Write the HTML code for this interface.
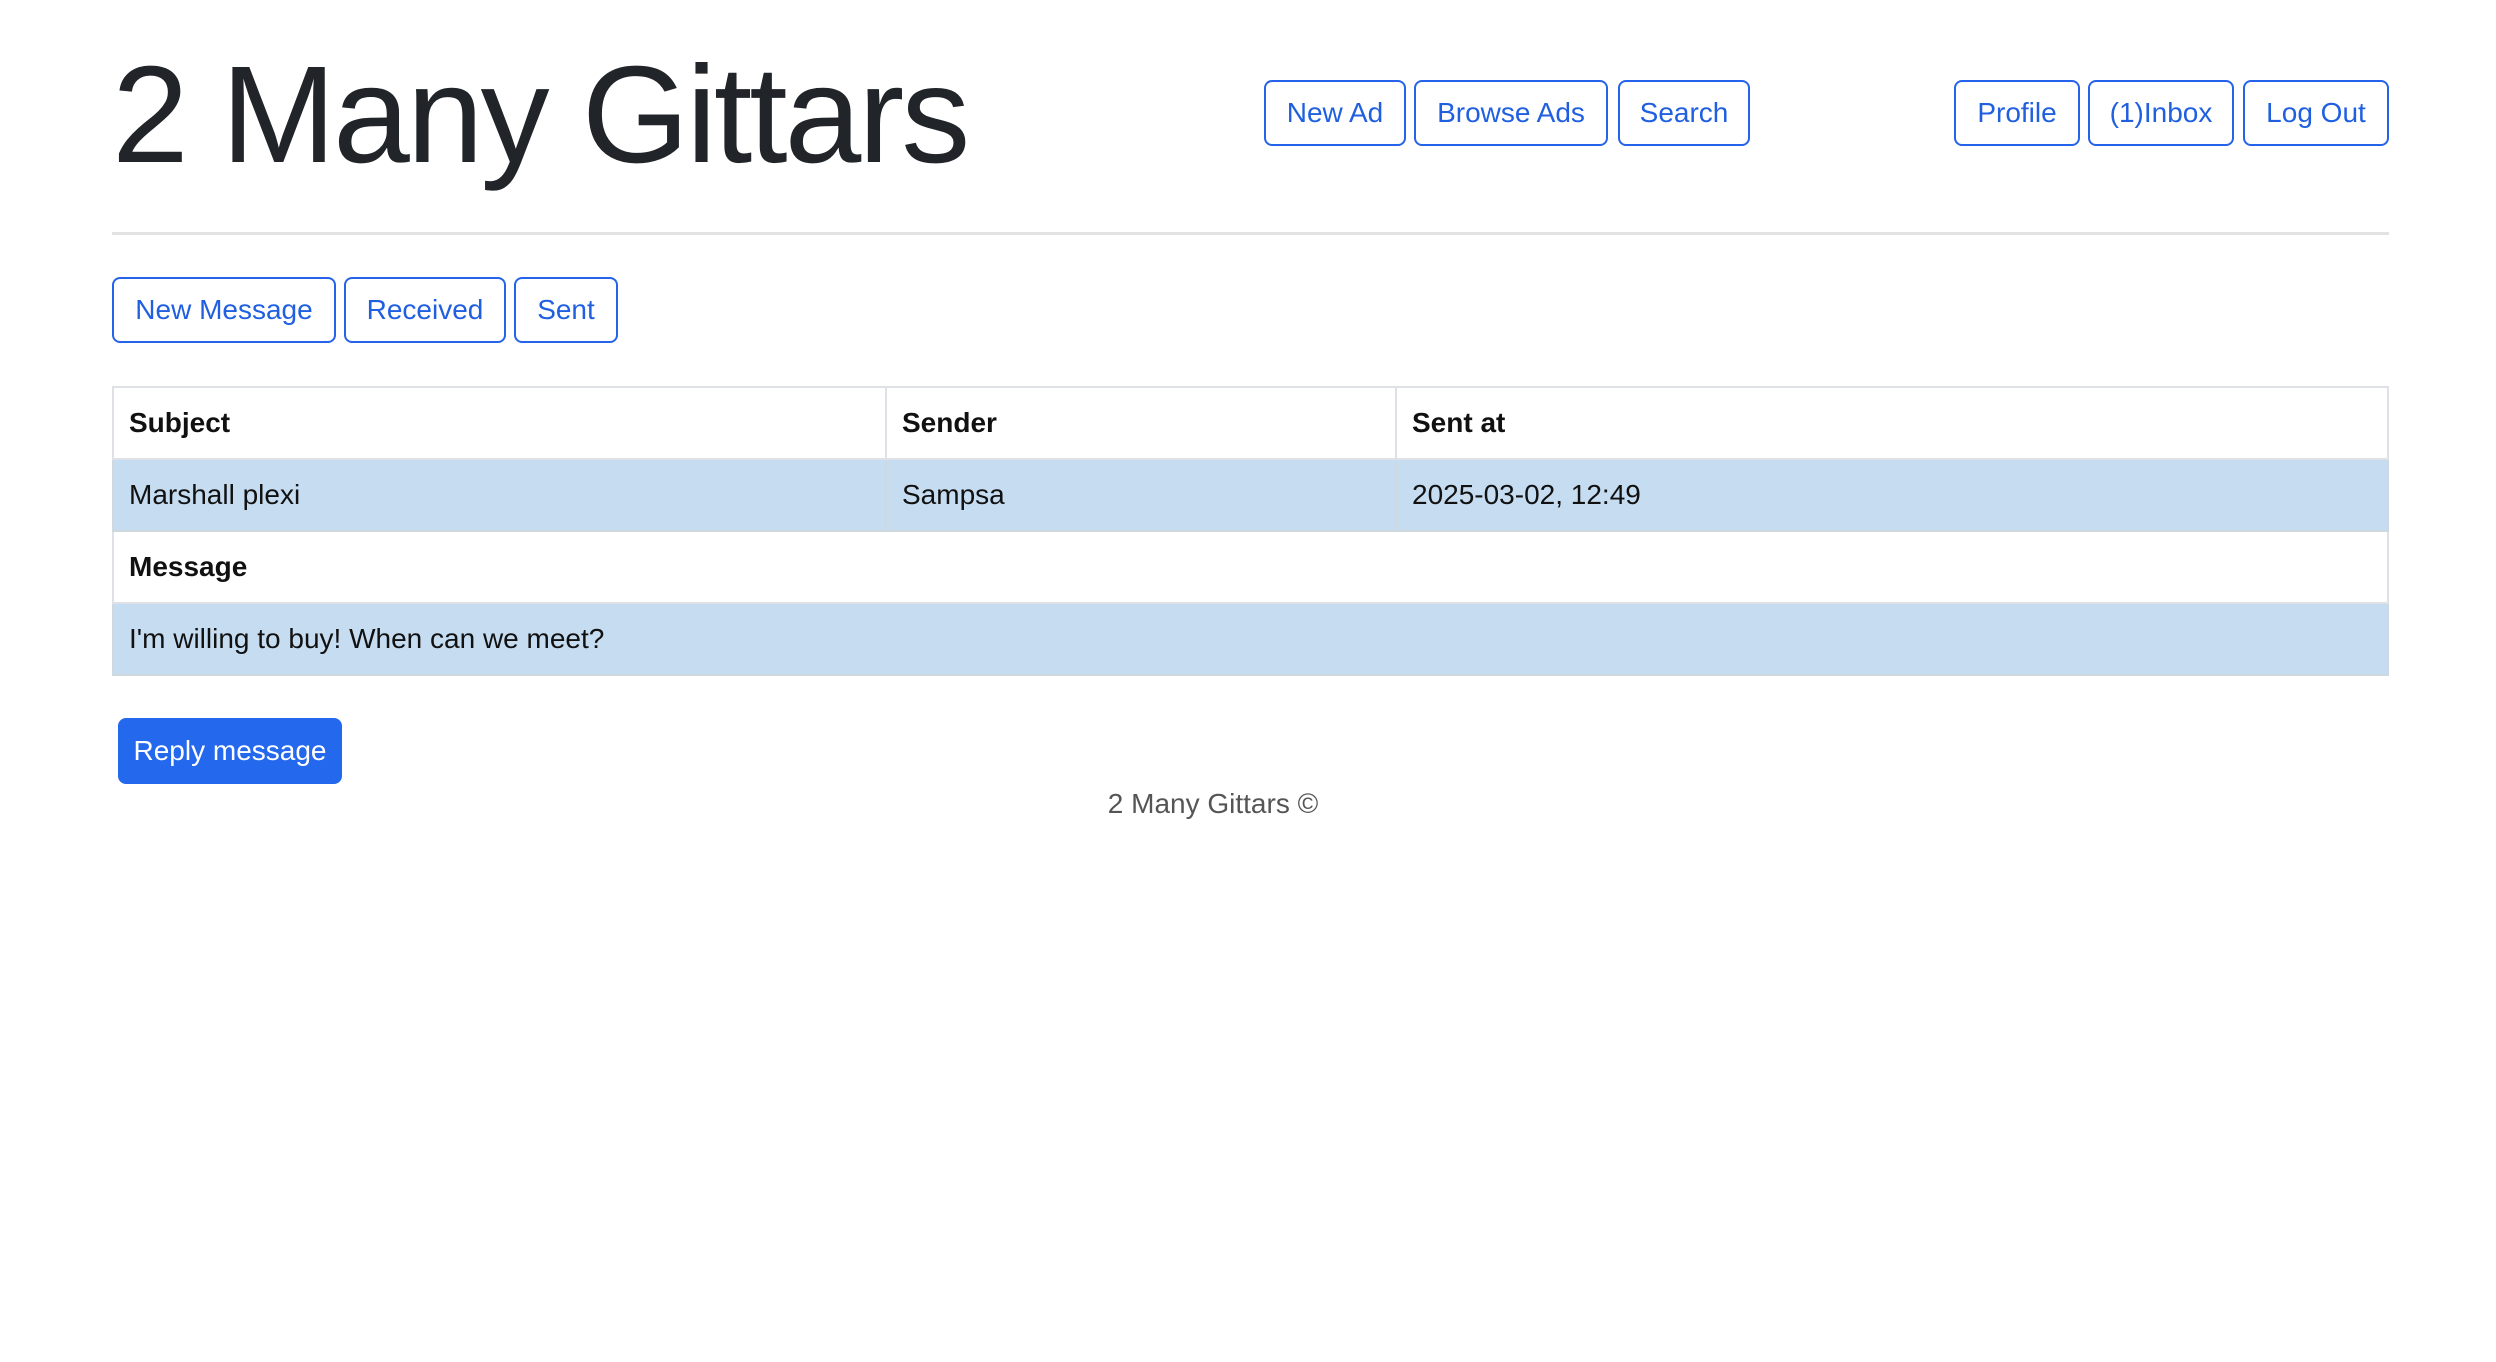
<!DOCTYPE html>
<html><head><meta charset="utf-8"><style>
*{box-sizing:border-box;margin:0;padding:0}
body{width:2496px;height:1362px;background:#fff;font-family:"Liberation Sans",sans-serif;color:#212529;position:relative;overflow:hidden}
.t{position:absolute;left:112px;top:40px;font-size:138px;font-weight:300;letter-spacing:-3px;color:#212529;line-height:150px}
.b{position:absolute;height:66px;border:2px solid #2563eb;border-radius:8px;color:#1f5fe0;font-size:28px;display:flex;align-items:center;justify-content:center;background:#fff}
.hr{position:absolute;left:112px;top:232px;width:2277px;height:3px;background:#e2e2e2}
table{position:absolute;left:112px;top:386px;width:2277px;border-collapse:collapse;font-size:28px}
td{height:72px;border:2px solid #dee2e6;padding:0 15px;vertical-align:middle;color:#111}
tr.bl td{background:#c5dcf1;border-color:#cfd7df}
.r{position:absolute;left:118px;top:718px;width:224px;height:66px;background:#2468ee;color:#fff;border-radius:8px;font-size:28px;display:flex;align-items:center;justify-content:center}
.f{position:absolute;left:0;width:2426px;top:788px;text-align:center;font-size:28px;color:#555}
</style></head><body>
<div class="t">2 Many Gittars</div>
<div class="b" style="left:1264px;top:80px;width:142px">New Ad</div>
<div class="b" style="left:1414px;top:80px;width:194px">Browse Ads</div>
<div class="b" style="left:1618px;top:80px;width:132px">Search</div>
<div class="b" style="left:1954px;top:80px;width:126px">Profile</div>
<div class="b" style="left:2088px;top:80px;width:146px">(1)Inbox</div>
<div class="b" style="left:2243px;top:80px;width:146px">Log Out</div>
<div class="hr"></div>
<div class="b" style="left:112px;top:277px;width:224px">New Message</div>
<div class="b" style="left:344px;top:277px;width:162px">Received</div>
<div class="b" style="left:514px;top:277px;width:104px">Sent</div>
<table>
<tr><td style="width:773px"><b>Subject</b></td><td style="width:510px"><b>Sender</b></td><td><b>Sent at</b></td></tr>
<tr class="bl"><td>Marshall plexi</td><td>Sampsa</td><td>2025-03-02, 12:49</td></tr>
<tr><td colspan="3"><b>Message</b></td></tr>
<tr class="bl"><td colspan="3">I'm willing to buy! When can we meet?</td></tr>
</table>
<div class="r">Reply message</div>
<div class="f">2 Many Gittars ©</div>
</body></html>
